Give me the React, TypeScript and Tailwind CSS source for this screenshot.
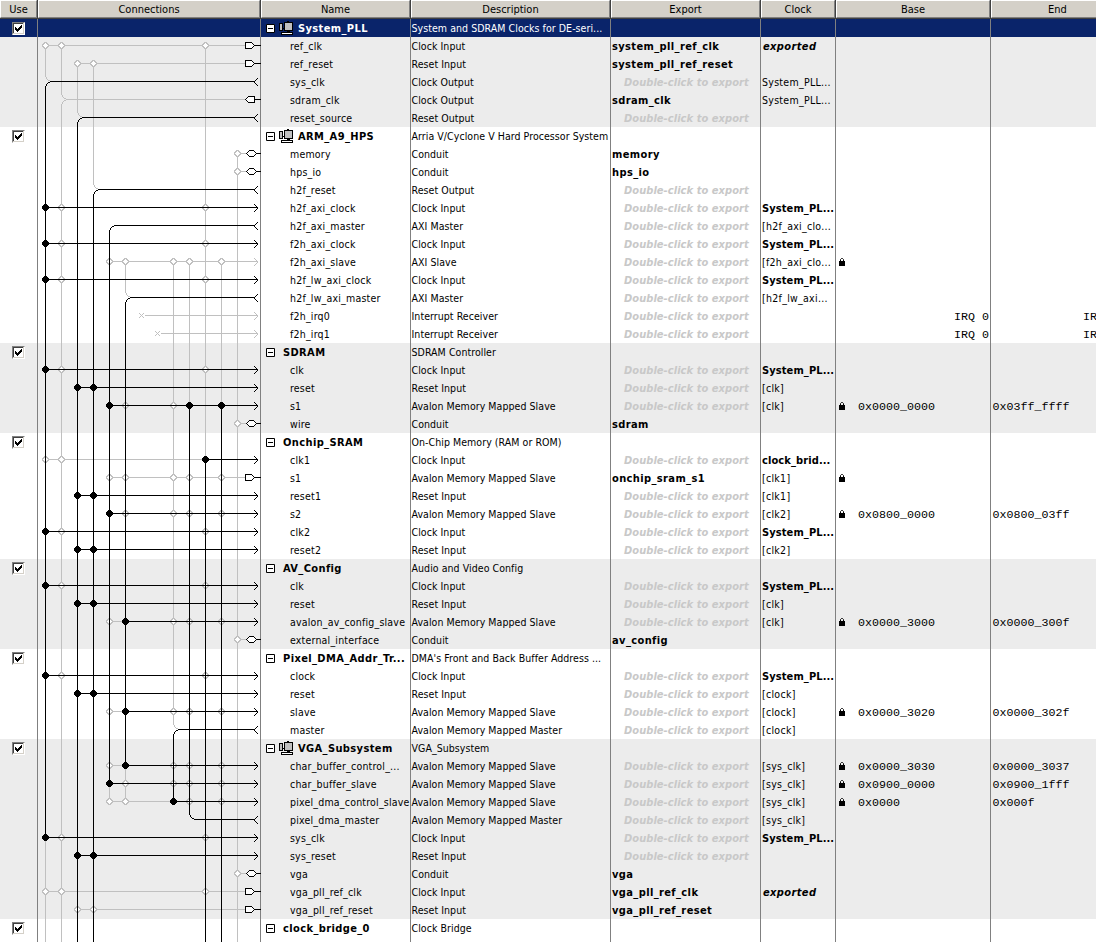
import React from "react";

type End = "in" | "out" | "pin" | "pout" | "conduit" | "ghost" | "irq";
type Wire = { end: End; dots?: number[]; rings?: number[]; from?: number; dim?: boolean };
type Row = {
  name: string;
  desc: string;
  head?: boolean;
  sub?: boolean;
  exp?: string;
  clk?: string;
  base?: string;
  last?: string;
  lock?: boolean;
  irq?: boolean;
  wire?: Wire;
};

const PL = "*System_PL...";
const clkWire: Wire = { end: "in", dots: [0], rings: [1, 10] };
const rstWire: Wire = { end: "in", dots: [2, 3] };
const condWire: Wire = { end: "conduit", rings: [12] };
const slaveWire: Wire = { end: "in", dots: [5], rings: [4, 8, 9, 11] };
const memWire: Wire = { end: "in", dots: [4], rings: [5, 8, 9, 11] };

const head = (name: string, desc: string, sub = false): Row => ({ name, desc, head: true, sub });
const port = (name: string, desc: string, wire: Wire | undefined, exp = "", clk = "", more: Partial<Row> = {}): Row => ({
  name,
  desc,
  wire,
  exp,
  clk,
  ...more,
});

const SLAVE = "Avalon Memory Mapped Slave";
const MASTER = "Avalon Memory Mapped Master";

const groups: Row[][] = [
  [
    head("System_PLL", "System and SDRAM Clocks for DE-seri...", true),
    port("ref_clk", "Clock Input", { end: "pin", rings: [0, 1, 10] }, "system_pll_ref_clk", "exported"),
    port("ref_reset", "Reset Input", { end: "pin", rings: [2, 3] }, "system_pll_ref_reset"),
    port("sys_clk", "Clock Output", { end: "out", from: 0 }, "", "System_PLL..."),
    port("sdram_clk", "Clock Output", { end: "pout", from: 1, dim: true }, "sdram_clk", "System_PLL..."),
    port("reset_source", "Reset Output", { end: "out", from: 2 }),
  ],
  [
    head("ARM_A9_HPS", "Arria V/Cyclone V Hard Processor System", true),
    port("memory", "Conduit", condWire, "memory"),
    port("hps_io", "Conduit", condWire, "hps_io"),
    port("h2f_reset", "Reset Output", { end: "out", from: 3 }),
    port("h2f_axi_clock", "Clock Input", clkWire, "", PL),
    port("h2f_axi_master", "AXI Master", { end: "out", from: 4 }, "", "[h2f_axi_clo..."),
    port("f2h_axi_clock", "Clock Input", clkWire, "", PL),
    port("f2h_axi_slave", "AXI Slave", { end: "ghost", rings: [4, 5, 8, 9, 11] }, "", "[f2h_axi_clo...", { lock: true }),
    port("h2f_lw_axi_clock", "Clock Input", clkWire, "", PL),
    port("h2f_lw_axi_master", "AXI Master", { end: "out", from: 5 }, "", "[h2f_lw_axi..."),
    port("f2h_irq0", "Interrupt Receiver", { end: "irq", from: 6 }, "", "", { irq: true }),
    port("f2h_irq1", "Interrupt Receiver", { end: "irq", from: 7 }, "", "", { irq: true }),
  ],
  [
    head("SDRAM", "SDRAM Controller"),
    port("clk", "Clock Input", clkWire, "", PL),
    port("reset", "Reset Input", rstWire, "", "[clk]"),
    port("s1", SLAVE, { end: "in", dots: [4, 9, 11], rings: [5, 8] }, "", "[clk]", { lock: true, base: "0x0000_0000", last: "0x03ff_ffff" }),
    port("wire", "Conduit", condWire, "sdram"),
  ],
  [
    head("Onchip_SRAM", "On-Chip Memory (RAM or ROM)"),
    port("clk1", "Clock Input", { end: "in", dots: [10], rings: [0, 1] }, "", "*clock_brid..."),
    port("s1", SLAVE, { end: "pin", rings: [4, 5, 8, 9, 11] }, "onchip_sram_s1", "[clk1]", { lock: true }),
    port("reset1", "Reset Input", rstWire, "", "[clk1]"),
    port("s2", SLAVE, memWire, "", "[clk2]", { lock: true, base: "0x0800_0000", last: "0x0800_03ff" }),
    port("clk2", "Clock Input", clkWire, "", PL),
    port("reset2", "Reset Input", rstWire, "", "[clk2]"),
  ],
  [
    head("AV_Config", "Audio and Video Config"),
    port("clk", "Clock Input", clkWire, "", PL),
    port("reset", "Reset Input", rstWire, "", "[clk]"),
    port("avalon_av_config_slave", SLAVE, slaveWire, "", "[clk]", { lock: true, base: "0x0000_3000", last: "0x0000_300f" }),
    port("external_interface", "Conduit", condWire, "av_config"),
  ],
  [
    head("Pixel_DMA_Addr_Tr...", "DMA's Front and Back Buffer Address ..."),
    port("clock", "Clock Input", clkWire, "", PL),
    port("reset", "Reset Input", rstWire, "", "[clock]"),
    port("slave", SLAVE, slaveWire, "", "[clock]", { lock: true, base: "0x0000_3020", last: "0x0000_302f" }),
    port("master", MASTER, { end: "out", from: 8 }, "", "[clock]"),
  ],
  [
    head("VGA_Subsystem", "VGA_Subsystem", true),
    port("char_buffer_control_...", SLAVE, slaveWire, "", "[sys_clk]", { lock: true, base: "0x0000_3030", last: "0x0000_3037" }),
    port("char_buffer_slave", SLAVE, memWire, "", "[sys_clk]", { lock: true, base: "0x0900_0000", last: "0x0900_1fff" }),
    port("pixel_dma_control_slave", SLAVE, { end: "in", dots: [8], rings: [4, 5, 9, 11] }, "", "[sys_clk]", { lock: true, base: "0x0000", last: "0x000f" }),
    port("pixel_dma_master", MASTER, { end: "out", from: 9 }, "", "[sys_clk]"),
    port("sys_clk", "Clock Input", clkWire, "", PL),
    port("sys_reset", "Reset Input", rstWire),
    port("vga", "Conduit", condWire, "vga"),
    port("vga_pll_ref_clk", "Clock Input", { end: "pin", rings: [0, 1, 10] }, "vga_pll_ref_clk", "exported"),
    port("vga_pll_ref_reset", "Reset Input", { end: "pin", rings: [2, 3] }, "vga_pll_ref_reset"),
  ],
  [
    head("clock_bridge_0", "Clock Bridge"),
    port("in_clk", "Clock Input", undefined, "clock_bridge_0_in_clk", "exported"),
  ],
];

/* Wiring coordinates are relative to the top left of the Connections column body. */
const X = (lane: number) => 7.5 + 16 * lane;
const Y = (row: number) => 8.5 + 18 * row;
const BOTTOM = 923;
const DIM = "#c0c0c0";

const dimTrunks = [
  `M${X(0)} ${Y(1)}V${Y(3) - 6}q1 5 6 6`,
  `M${X(1)} ${Y(1)}V${Y(4) - 6}q1 5 6 6q-5 1 -6 6V${BOTTOM}`,
  `M${X(2)} ${Y(2)}V${Y(5) - 6}q1 5 6 6`,
  `M${X(3)} ${Y(2)}V${Y(9) - 6}q1 5 6 6`,
  `M${X(5)} ${Y(13)}V${Y(15) - 6}q1 5 6 6`,
  `M${X(8)} ${Y(13)}V${Y(39) - 6}q1 5 6 6`,
  `M${X(9)} ${Y(13)}V${Y(21)}`,
  `M${X(11)} ${Y(13)}V${Y(21)}`,
  `M${X(10)} ${Y(1)}V${Y(24)}`,
  `M${X(12)} ${Y(7)}V${BOTTOM}`,
  `M${X(0)} ${Y(45)}V${BOTTOM}`,
  `M${X(4)} ${Y(42)}V${Y(43)}`,
  `M${X(5)} ${Y(41)}V${Y(43)}`,
];
const liveTrunks = [
  `M${X(0) + 6} ${Y(3)}q-5 1 -6 6V${Y(45)}`,
  `M${X(2) + 6} ${Y(5)}q-5 1 -6 6V${BOTTOM}`,
  `M${X(3) + 6} ${Y(9)}q-5 1 -6 6V${BOTTOM}`,
  `M${X(4) + 6} ${Y(11)}q-5 1 -6 6V${Y(42)}`,
  `M${X(5) + 6} ${Y(15)}q-5 1 -6 6V${Y(41)}`,
  `M${X(8) + 6} ${Y(39)}q-5 1 -6 6V${Y(43)}`,
  `M${X(9)} ${Y(21)}V${Y(44) - 6}q1 5 6 6`,
  `M${X(10)} ${Y(24)}V${BOTTOM}`,
  `M${X(11)} ${Y(21)}V${BOTTOM}`,
];

const wires = groups.flat().flatMap((r, i) => (r.wire ? [{ ...r.wire, y: Y(i) }] : []));

function Wiring() {
  const dim: string[] = [...dimTrunks];
  const live: string[] = [...liveTrunks];
  wires.forEach((w) => {
    const dots = w.dots ?? [];
    const rings = w.rings ?? [];
    const stop = w.end === "pin" || w.end === "pout" ? 207 : w.end === "conduit" ? 208 : w.end === "out" ? 217 : 220;
    if (w.end === "irq") dim.push(`M${X(w.from!) + 3} ${w.y}H220`);
    else if (w.from !== undefined) (w.dim ? dim : live).push(`M${X(w.from) + 5.5} ${w.y}H${stop}`);
    else {
      const l = X(Math.min(...dots, ...rings));
      const d = dots.length ? X(Math.min(...dots)) : stop;
      if (l < d) dim.push(`M${l} ${w.y}H${d}`);
      if (dots.length) live.push(`M${d} ${w.y}H${stop}`);
    }
  });
  return (
    <svg width="223" height="923" viewBox="0 0 223 923" fill="none" shapeRendering="crispEdges" className="block">
      <path d={dim.join("")} stroke={DIM} />
      {wires.map((w) =>
        (w.rings ?? []).map((l) => (
          <g key={`${l}-${w.y}`}>
            <path d={`M${X(l) - 1.5} ${w.y - 3.5}h3v1h1v1h1v3h-1v1h-1v1h-3v-1h-1v-1h-1v-3h1v-1h1z`} fill={DIM} />
            <path d={`M${X(l) - 0.5} ${w.y - 2.5}h1v1h1v1h1v1h-1v1h-1v1h-1v-1h-1v-1h-1v-1h1v-1h1z`} fill="#fff" />
          </g>
        ))
      )}
      <path d={live.join("")} stroke="#000" />
      {wires.map((w) => {
        const y = w.y;
        return (
          <g key={y}>
            {(w.dots ?? []).map((l) => (
              <path key={l} d={`M${X(l) - 1.5} ${y - 3.5}h3v1h1v1h1v3h-1v1h-1v1h-3v-1h-1v-1h-1v-3h1v-1h1z`} fill="#000" />
            ))}
            {(w.end === "in" || w.end === "ghost" || w.end === "irq") && (
              <path
                d={`M216 ${y - 3.5}h1v1h1v1h1v1h1v2h-1v1h-1v1h-1v1h-1v-1h1v-1h1v-1h1v-2h-1v-1h-1v-1h-1z`}
                fill={w.end === "in" ? "#000" : DIM}
              />
            )}
            {w.end === "irq" && <path d={`M${X(w.from!) - 2.5} ${y - 2.5}l5 5m0 -5l-5 5`} stroke={DIM} />}
            {w.end === "out" && (
              <path
                d={`M220 ${y - 3.5}h-1v1h-1v1h-1v1h-1v2h1v1h1v1h1v1h1v-1h-1v-1h-1v-1h-1v-2h1v-1h1v-1h1z`}
                fill="#000"
              />
            )}
            {w.end === "pin" && <path d={`M207.5 ${y - 3}h6l3 3l-3 3h-6zM216 ${y}h7`} stroke="#000" fill="#fff" />}
            {w.end === "pout" && <path d={`M216.5 ${y - 3}h-6l-3 3l3 3h6zM216.5 ${y}h6.5`} stroke="#000" fill="#fff" />}
            {w.end === "conduit" && (
              <path d={`M208.5 ${y}l3 -3h4l3 3l-3 3h-4zM218 ${y}h5`} stroke="#000" fill="#fff" />
            )}
          </g>
        );
      })}
    </svg>
  );
}

function Check() {
  return (
    <span className="h-[13px] w-[13px] border border-t-[#808080] border-l-[#808080] border-r-white border-b-white bg-white">
      <svg width="11" height="11" viewBox="0 0 11 11" shapeRendering="crispEdges" className="block">
        <path d="M0 11V0H11V1H1V11z" fill="#404040" />
        <path d="M11 0V11H0V10H10V0z" fill="#d4d0c8" />
        <path d="M2 4h1v1h1v1h1v-1h1v-1h1v-1h1v-1h1v3h-1v1h-1v1h-1v1h-1v1h-1v-1h-1v-1h-1z" fill="#000" />
      </svg>
    </span>
  );
}

function Minus() {
  return (
    <svg width="9" height="9" viewBox="0 0 9 9" className="block shrink-0">
      <path d="M.5 .5h8v8h-8z" fill="#fff" stroke="#000" />
      <path d="M2 4.5h5" stroke="#000" />
    </svg>
  );
}

function SubsystemIcon() {
  return (
    <svg width="15" height="15" viewBox="0 0 15 15" shapeRendering="crispEdges" className="block shrink-0">
      <path d="M.5 2.5h3v7h-3z" fill="#c0c0c0" stroke="#000" />
      <path d="M3 7.5h3" stroke="#000" />
      <path d="M5.5 1.5h8v8h-8z" fill="#c0c0c0" stroke="#000" />
      <path d="M8 .5h2M8 10.5h3" stroke="#000" />
      <path d="M2.5 11.5h11v2h-11z" fill="#fff" stroke="#000" />
    </svg>
  );
}

function Lock() {
  return (
    <svg width="6" height="8" viewBox="0 0 6 8" className="block shrink-0">
      <path d="M0 3h6v5H0z" fill="#000" />
      <path d="M1.5 3V1.5l1 -1h1l1 1V3" stroke="#000" fill="none" />
    </svg>
  );
}

const COLS = "grid grid-cols-[38px_223px_150px_200px_150px_75px_155px_134px] w-[1125px]";
const CELL = "flex items-center overflow-hidden border-r border-[#808080] whitespace-pre";
const BOLD = "font-bold text-[11px] leading-[17px] pt-px tracking-[0.38px]";
const CLOCK_BOLD = "font-bold text-[11px] leading-[17px] pt-px tracking-[0.1px]";
const HINT = "ml-3 pt-px text-[11px] leading-[17px] font-bold tracking-[0.06px] text-[#c8c8c8] italic";
const MONO = "font-['Liberation_Mono',monospace] text-[11.67px] leading-[16px] pt-px";

function TableRow({ row, selected, shaded }: { row: Row; selected: boolean; shaded: boolean }) {
  const tone = selected ? "bg-[#0a246a] text-white" : shaded ? "bg-[#ececec] text-black" : "bg-white text-black";
  const clk = row.clk ?? "";
  return (
    <div className={`${COLS} h-[18px] grid-rows-[18px] ${tone}`}>
      <div className={`${CELL} pl-3`}>{row.head && <Check />}</div>
      <div className={CELL} />
      {row.head ? (
        <div className={`${CELL} pl-[5px]`}>
          <Minus />
          {row.sub && <span className="ml-1"><SubsystemIcon /></span>}
          <span className={`${BOLD} ${row.sub ? "ml-1" : "ml-2"}`}>{row.name}</span>
        </div>
      ) : (
        <div className={`${CELL} pl-[29px] tracking-[0.2px]`}>{row.name}</div>
      )}
      <div className={`${CELL} pl-[0.5px] tracking-[0.06px]`}>{row.desc}</div>
      <div className={`${CELL} pl-px`}>
        {row.head ? null : row.exp ? (
          <span className={BOLD}>{row.exp}</span>
        ) : (
          <span className={HINT}>Double-click to export</span>
        )}
      </div>
      <div className={`${CELL} pl-px tracking-[0.28px]`}>
        {clk === "exported" ? (
          <span className={`${BOLD} ml-px italic`}>{clk}</span>
        ) : clk.startsWith("*") ? (
          <span className={CLOCK_BOLD}>{clk.slice(1)}</span>
        ) : (
          clk
        )}
      </div>
      <div className={`${CELL} pr-px pl-[3px]`}>
        {row.lock && <Lock />}
        {row.base && <span className={`${MONO} ml-[13px]`}>{row.base}</span>}
        {row.irq && <span className={`${MONO} ml-auto`}>IRQ 0</span>}
      </div>
      <div className="flex items-center pl-[1.5px] whitespace-pre">
        {row.last && <span className={MONO}>{row.last}</span>}
        {row.irq && <span className={`${MONO} ml-auto`}>IRQ 31</span>}
      </div>
    </div>
  );
}

export default function App() {
  let n = 0;
  return (
    <div className="h-[942px] w-[1096px] overflow-hidden bg-white font-['DejaVu_Sans_Condensed','DejaVu_Sans',sans-serif] text-[10.5px] leading-[18px] text-black">
      <div className={`${COLS} h-[19px] grid-rows-[18px] border-b border-[#404040] bg-[#d4d0c8]`}>
        {["Use", "Connections", "Name", "Description", "Export", "Clock", "Base", "End"].map((h) => (
          <div key={h} className="flex border-r border-[#404040]">
            <div className="flex flex-1 justify-center border border-t-white border-r-[#808080] border-b-[#808080] border-l-white pt-px text-[11px] leading-[15px]">
              {h}
            </div>
          </div>
        ))}
      </div>
      <div className="relative h-[923px] overflow-hidden">
        {groups.map((g, gi) => (
          <div key={gi}>
            {g.map((row) => {
              const i = n++;
              return <TableRow key={i} row={row} selected={i === 0} shaded={gi % 2 === 0} />;
            })}
          </div>
        ))}
        <div className="absolute top-0 left-[38px]">
          <Wiring />
        </div>
      </div>
    </div>
  );
}
